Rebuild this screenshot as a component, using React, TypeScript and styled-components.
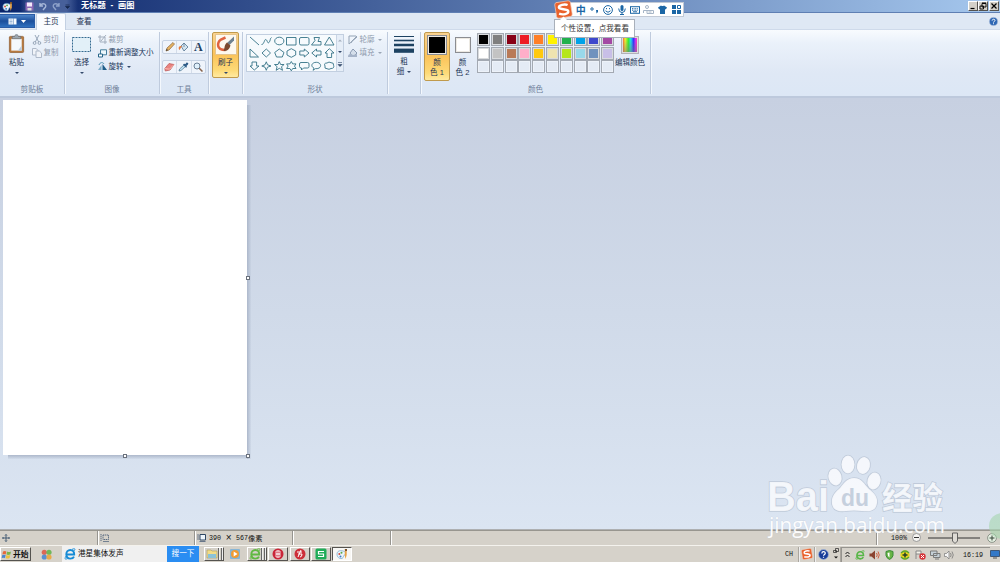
import React from "react";
import styled, { createGlobalStyle, css } from "styled-components";

const Global = createGlobalStyle`
  * { box-sizing: border-box; }
  html, body { margin: 0; padding: 0; }
  body {
    width: 1000px; height: 562px; overflow: hidden;
    font-family: "Liberation Sans", "Noto Sans CJK SC", sans-serif;
    font-size: 7.6px; line-height: 10px; color: #1d3555;
  }
  svg { display: block; flex: none; overflow: visible; }
`;

const Window = styled.div`
  position: relative; width: 1000px; height: 562px; overflow: hidden;
  display: flex; flex-direction: column;
`;

/* Title bar */
const TitleBar = styled.header`
  flex: none; height: 13px; display: flex; align-items: center; padding: 0 1px 0 2px;
  background: linear-gradient(90deg, #0a246a, #a6c8ee); border-bottom: 1px solid #5f7fb3;
`;
const QuickBar = styled.div`
  width: 58px; height: 12px; margin-left: 7px; padding-left: 5px;
  display: flex; align-items: center; gap: 5px;
  background: linear-gradient(90deg, transparent, #47609a 20%, #47609a 80%, transparent);
`;
const Title = styled.h1`
  margin: 0 auto 0 3px; font-size: 8.2px; line-height: 12px; font-weight: 700; color: #fff;
  white-space: pre; word-spacing: 2.6px;
`;
const WindowButton = styled.button<{ $gap?: number }>`
  width: 10px; height: 10px; padding: 0; margin-left: ${(p) => p.$gap ?? 0}px;
  display: flex; align-items: center; justify-content: center;
  background: #d4d0c8; border: 1px solid; border-color: #fff #55534f #55534f #fff;
`;

/* Tabs */
const TabRow = styled.nav`
  flex: none; height: 17px; display: flex; align-items: flex-end; padding-right: 2px;
  background: #dfe8f4; border-bottom: 1px solid #cfdaea;
`;
const FileButton = styled.button`
  width: 35px; height: 14px; margin-bottom: 1px; padding: 0; border: 1px solid #2a5ba5; border-left: 0;
  display: flex; align-items: center; justify-content: center; gap: 4px; align-self: flex-end;
  background: linear-gradient(#4c84ca, #1b4e9b 50%, #2f70bf);
`;
const Tab = styled.button<{ $active?: boolean }>`
  border: 0; padding: 1px 0 0; height: 16px; width: ${(p) => (p.$active ? 30 : 36)}px;
  font: inherit; color: #1f3553; background: none;
  ${(p) => p.$active && css`
    margin: 0 0 -1px 1px; border: 1px solid #c3d0e2; border-bottom: 0; height: 17px; padding: 0;
    border-radius: 2px 2px 0 0; background: #fafcff;
  `}
`;
const HelpSpot = styled.div`margin: 0 0 3px auto;`;

/* Ribbon */
const Ribbon = styled.section`
  flex: none; height: 68px; display: flex; padding-top: 1px;
  background: linear-gradient(#f8fbfe 0, #eaf1fa 20%, #dfe8f5 65%, #dce7f5);
  border-bottom: 2px solid #bdc9dc;
`;
const Group = styled.div<{ $w: number }>`
  width: ${(p) => p.$w}px; height: 62px; margin-top: 1px; display: flex; flex-direction: column;
  border-right: 1px solid #bfcbdd; box-shadow: 1px 0 #f4f8fd;
`;
const GroupBody = styled.div<{ $pad?: number }>`
  flex: none; height: 52px; display: flex; align-items: flex-start; padding-left: ${(p) => p.$pad ?? 3}px;
`;
const GroupLabel = styled.div`
  flex: none; text-align: center; color: #6f8099; line-height: 11px; height: 11px;
`;
const BigButton = styled.button<{ $w: number; $h?: number; $active?: boolean }>`
  flex: none; width: ${(p) => p.$w}px; height: ${(p) => p.$h ?? 46}px; padding: 1px 0 0;
  border: 1px solid transparent; background: none; font: inherit; font-size: 7.5px; color: #1d3555;
  display: flex; flex-direction: column; align-items: center; border-radius: 2px; white-space: nowrap;
  ${(p) => p.$active && css`
    border-color: #c09a4c; background: linear-gradient(#fbd391, #fbc35a 50%, #fdda78 85%, #ffeaa0);
  `}
`;
const BigIcon = styled.span<{ $h?: number }>`
  height: ${(p) => p.$h ?? 21}px; margin-bottom: ${(p) => 24 - (p.$h ?? 21)}px;
  display: flex; align-items: center; justify-content: center;
`;
const Caret = styled.i<{ $dim?: boolean; $top?: number }>`
  display: block; width: 0; height: 0; margin-top: ${(p) => p.$top ?? 0}px;
  border: 2px solid transparent; border-bottom: 0; border-top: 2px solid ${(p) => (p.$dim ? "#9aa5b5" : "#33496b")};
`;
const CommandList = styled.div<{ $left?: number }>`
  display: flex; flex-direction: column; padding-top: 1px; margin-left: ${(p) => p.$left ?? 0}px;
`;
const Command = styled.div<{ $dim?: boolean }>`
  height: 13.6px; display: flex; align-items: center; gap: 1.5px; white-space: nowrap; font-size: 7.5px;
  color: ${(p) => (p.$dim ? "#8f9bad" : "#173459")};
  & > i { margin-left: 1.5px; }
`;
const ToolBoxes = styled.div`display: flex; flex-direction: column; gap: 6px; padding-top: 8px;`;
const ToolBox = styled.div`
  width: 44px; height: 14px; display: flex; border: 1px solid #c6d2e3; border-radius: 2px; background: #eff4fb;
`;
const Tool = styled.button`
  flex: 1; padding: 0; border: 0; background: none; display: flex; align-items: center; justify-content: center;
  & + & { border-left: 1px solid #d3dce9; }
`;
const Letter = styled.b`font: 700 12px/12px "Liberation Serif", serif; color: #23405f;`;
const BrushFace = styled.span`
  width: 22px; height: 21px; display: flex; align-items: center; justify-content: center;
  background: #fdf8ef; border: 1px solid #e4c58f;
`;
const Gallery = styled.div`
  width: 98px; height: 38px; margin-top: 2px; display: flex; background: #f6fafd; border: 1px solid #c2cfe0;
`;
const ShapeGrid = styled.div`
  width: 89px; padding: 0 1px; display: grid; grid-template: repeat(3, 12.3px) / repeat(7, 12.5px); place-items: center;
`;
const GalleryScroll = styled.div`
  flex: 1; border-left: 1px solid #c8d4e4; display: flex; flex-direction: column; align-items: center;
  justify-content: space-around; background: #e6eef8;
`;
const SizeLabel = styled.span`display: flex; align-items: center; gap: 3px; height: 10px;`;
const ColorFace = styled.span<{ $c: string; $s: number }>`
  width: ${(p) => p.$s}px; height: ${(p) => p.$s}px; background: ${(p) => p.$c};
  border: 1px solid #8b8d92; box-shadow: inset 0 0 0 1px #ece9e2;
`;
const Palette = styled.div`
  margin: 1px 0 0 2px; width: 138px; display: grid; grid-template: repeat(3, 13.6px) / repeat(10, 13.8px);
`;
const Swatch = styled.span<{ $c?: string }>`
  width: 13px; height: 13px; border: 1px solid #a3a9b2; background: ${(p) => p.$c ?? "#e4ebf5"};
  box-shadow: inset 0 0 0 1px ${(p) => (p.$c ? "#d9dbdd" : "#edf2f9")};
`;
const Rainbow = styled.span`
  width: 18px; height: 18px; border: 1px solid #b2b2b8; box-shadow: inset 0 0 0 1px #ddd;
  background: linear-gradient(rgba(255,255,255,0) 20%, rgba(120,120,120,.55)),
    linear-gradient(90deg, #f33, #ee3 20%, #3e3 40%, #2de 55%, #33f 72%, #e3e 88%, #f35);
`;

/* Workspace */
const Workspace = styled.main`
  flex: none; height: 431px; padding: 2px 0 0 3px; background: linear-gradient(#c7d0e1, #d0dae9 50%, #dbe5f2);
`;
const Paper = styled.div`
  position: relative; width: 244px; height: 355px; background: #fff;
  &::after {
    content: ""; position: absolute; left: 244px; top: 5px; width: 4px; height: 354px;
    background: linear-gradient(90deg, #adb8cb, rgba(185,197,215,.2));
  }
  &::before {
    content: ""; position: absolute; left: 5px; top: 355px; width: 240px; height: 4px;
    background: linear-gradient(#adb8cb, rgba(185,197,215,.2));
  }
`;
const Handle = styled.i<{ $x: number; $y: number }>`
  position: absolute; z-index: 1; left: ${(p) => p.$x}px; top: ${(p) => p.$y}px; width: 4px; height: 4px;
  border: 1px solid #6a717c; background: #fff;
`;

/* Status bar */
const StatusBar = styled.footer`
  flex: none; height: 16px; display: flex; background: #d5d1c9; border-top: 1px solid #aeb0b2;
  font: 6.7px/14px "Liberation Mono", "Noto Sans CJK SC", monospace; color: #111;
`;
const StatusCell = styled.div<{ $w: number }>`
  width: ${(p) => p.$w}px; height: 15px; padding-left: 2px; display: flex; align-items: center; gap: 3px; white-space: pre;
  border-right: 1px solid #96948f; box-shadow: inset 0 1px #98968f, 1px 0 #fff;
`;
const Dimensions = styled.span`
  display: flex; align-items: center;
  & > em { width: 15px; text-align: center; font: 10px/12px "Liberation Sans", sans-serif; }
  & > small { font: 7.2px/14px "Noto Sans CJK SC", sans-serif; }
`;
const Zoom = styled.div`
  flex: 1; display: flex; align-items: center; gap: 5px; padding-left: 14px; box-shadow: inset 0 1px #98968f;
`;

/* Taskbar */
const TaskBar = styled.footer`
  flex: none; height: 17px; display: flex; align-items: center; background: #d6d2ca; border-top: 1px solid #f4f2ed; color: #111;
`;
const Start = styled.button`
  width: 31px; height: 14px; padding: 0 0 0 1px; border: 1px solid; border-color: #fff #55534f #55534f #fff;
  background: #d4d0c8; display: flex; align-items: center; gap: 2px; font: 700 7.8px/12px "Noto Sans CJK SC", sans-serif; color: #111;
`;
const Launcher = styled.div`width: 31px; display: flex; justify-content: center;`;
const Search = styled.div`
  width: 105px; height: 16px; background: #f0f0f0; display: flex; align-items: center; gap: 2px; padding-left: 2px; font-size: 7.6px;
`;
const SearchButton = styled.button`
  width: 32px; height: 16px; border: 0; padding: 0; margin-right: 5px; background: #2a8df2; color: #fff; font: inherit;
`;
const TaskButton = styled.button<{ $kind?: "flat" | "active" | "stack" }>`
  width: 20px; height: 14px; padding: 0; margin-right: 1.4px; display: flex; align-items: center; justify-content: center;
  background: ${(p) => (p.$kind === "active" ? "#f7f6f3" : "#d4d0c8")}; border: 1px solid;
  border-color: ${(p) => (p.$kind === "flat" ? "transparent" : p.$kind === "active" ? "#55534f #fff #fff #55534f" : "#fff #55534f #55534f #fff")};
  ${(p) => p.$kind === "stack" && css`
    justify-content: flex-start; padding-left: 1px;
    background: linear-gradient(90deg, transparent 13px, #666 13px 14px, #eee 14px 15px, transparent 15px 16px, #666 16px 17px, #eee 17px) #d4d0c8;
  `}
`;
const Tray = styled.div`
  margin-left: auto; width: 217px; height: 16px; display: flex; align-items: center; color: #111;
  font: 6.7px/14px "Liberation Mono", monospace;
`;
const TraySlot = styled.span<{ $w: number; $line?: boolean }>`
  width: ${(p) => p.$w}px; height: 15px; display: flex; align-items: center; justify-content: center;
  ${(p) => p.$line && css`border-right: 1px solid #aaa69f; box-shadow: 1px 0 #eee;`}
`;
const Notify = styled.div`
  height: 15px; width: 149px; padding-left: 1px; display: flex; align-items: center;
  border-top: 1px solid #96948f; border-left: 1px solid #96948f;
`;

/* Floating layers */
const InputBar = styled.div`
  position: absolute; left: 556px; top: 2px; width: 128px; height: 15px; padding-left: 17px;
  display: flex; align-items: center; background: #fff; border: 1px solid #c2cad6;
`;
const InputLogo = styled.div`position: absolute; left: -3px; top: -3px;`;
const InputSlot = styled.span`
  width: 13.7px; height: 12px; display: flex; align-items: center; justify-content: center;
  font: 700 10px/12px "Noto Sans CJK SC", sans-serif; color: #1b66a5;
`;
const Tip = styled.div`
  position: absolute; left: 554px; top: 19px; width: 81px; height: 19px; padding-left: 6px;
  border: 1px solid #a9b0ba; background: #fff; color: #333; font-size: 7.55px; line-height: 17px; white-space: nowrap;
  & > svg { position: absolute; left: 5px; top: -4px; }
`;
const Watermark = styled.div`position: absolute; left: 760px; top: 450px; pointer-events: none;`;

type IconProps = { w: number; h?: number; box?: string; children: React.ReactNode };
const Icon = ({ w, h = w, box, children }: IconProps) => (
  <svg width={w} height={h} viewBox={box ?? `0 0 ${w} ${h}`} fill="none">{children}</svg>
);

const PaintIcon = ({ s = 11 }: { s?: number }) => (
  <Icon w={s} box="0 0 12 12">
    <path d="M1 6C1 3 4 2 7 3c3 .5 3 3 1.5 4S8 9.5 6 10.5C3 11 1 9 1 6Z" fill="#e9f4fb" stroke="#71a3c7" strokeWidth=".7" />
    <circle cx="3.3" cy="6" r="1" fill="#d64b3a" /><circle cx="5.5" cy="4.7" r="1" fill="#58a947" /><circle cx="4.5" cy="8.5" r="1" fill="#3b75c1" />
    <path d="M9 1h1.7v6L9.5 11 8.7 7Z" fill="#e7a346" /><path d="M8.8 1H11v2H9Z" fill="#7c532b" />
  </Icon>
);

const SogouIcon = ({ s }: { s: number }) => (
  <Icon w={s} box="0 0 18 18">
    <g transform="rotate(-9 9 9)">
      <rect x="1.5" y="1.5" width="15" height="15" rx="2" fill="#e9622d" stroke="#f5d2c1" strokeWidth=".6" />
      <path d="M13.5 5.4C11 3.8 5 4 5 6.5S13.2 8.6 13.2 11.3 7.5 14.2 4.3 12.3" stroke="#fff" strokeWidth="2.3" />
    </g>
  </Icon>
);

const HelpIcon = ({ s, c }: { s: number; c: string }) => (
  <Icon w={s} box="0 0 10 10">
    <circle cx="5" cy="5" r="4.5" fill={c} stroke="#a5b9d8" strokeWidth=".7" />
    <path d="M3.5 4C3.5 2 6.6 2 6.6 3.8 6.6 5 5 4.9 5 6.2M5 7v1" stroke="#fff" strokeWidth="1.1" />
  </Icon>
);

const BrowserIcon = ({ s, c }: { s: number; c: string }) => (
  <Icon w={s} box="0 0 12 12">
    <path d="M3 6.5h7.2C10.3 3.8 8.7 2 6.3 2 4 2 2.3 3.8 2.3 6.3S4 10.6 6.4 10.6c1.7 0 3-.7 3.6-2" stroke={c} strokeWidth="1.9" />
    <path d="M10 3C12 .5 10.5.2 8 1.4M3 7C.5 10 0 12 3.5 10.7" stroke={c} strokeWidth=".9" />
  </Icon>
);

const Scissors = () => (
  <Icon w={10}><path d="M3 0l3.7 7M7 0L3.3 7" stroke="#98a7b9" /><circle cx="2.6" cy="8" r="1.4" stroke="#98a7b9" /><circle cx="7.4" cy="8" r="1.4" stroke="#98a7b9" /></Icon>
);
const Copy = () => (
  <Icon w={10}><path d="M.5.5h3.7L6 2.4V7H.5Z" fill="#f0f3f8" stroke="#aeb9c9" /><path d="M4 3h3.3L9.5 5v4.5H4Z" fill="#f0f3f8" stroke="#aeb9c9" /></Icon>
);
const Crop = () => (
  <Icon w={9}><path d="M2 0v7h7M0 2h7v7M3 6l5-6" stroke="#9ca8b8" strokeWidth=".9" /></Icon>
);
const Resize = () => (
  <Icon w={9}><path d="M2.5.8h6v5h-6Z" fill="#edf7fb" stroke="#437c9b" /><path d="M.5 5h4v3h-4Z" fill="#fff" stroke="#276588" /></Icon>
);
const Rotate = () => (
  <Icon w={9}><path d="M0 8h3.5V3Z" fill="#7dacc8" /><path d="M4.5 8H9L4.5 2Z" fill="#1e5c88" /><path d="M1 3C2 0 5 0 6 2" stroke="#4d90b2" /></Icon>
);

const shapePaths = [
  "M1 1l9 8", "M.5 8.500C3 9 3.500 2.500 5 3.500S6.500 8 8 6.500 9 2 10.500 1.500", "M.7 5a4.6 3.8 0 1 0 9.2 0a4.6 3.8 0 1 0-9.2 0", "M.5 1.5h9.5v7.5H.5Z",
  "M2 1.5h6.5q1.5 0 1.5 1.5v4.5Q10 9 8.5 9H2Q.5 9 .5 7.5V3Q.5 1.5 2 1.5", "M3 1.500h5.500L7 5.500h3V9H.500L4 4.500Z", "M5.3 1L10 9H.5Z",
  "M1 1l8.5 8H1Z", "M5.3 1L9.5 5 5.3 9 1 5Z", "M5.3 1L10 4.5 8.3 9H2.5L.7 4.5Z", "M5.300.700L9.700 3v4L5.300 9.300 1 7V3Z",
  "M.8 3h4.500V1L10 5 5.300 9V7H.8Z", "M10 3H5.500V1L.8 5l4.700 4V7H10Z", "M3 9.500V5H1L5.300.7 10 5H7.600v4.500Z",
  "M3 1v4H1l4.300 4L10 5H7.600V1Z", "M5.300.8l1.200 3L10 5 6.500 6.200 5.300 9.300 4 6.200.8 5 4 3.800Z", "M5.300.5l1.300 3h3.500L7.500 5.700l1 3.600-3.200-2-3.100 2 .9-3.600L.5 3.500H4Z",
  "M5.300.5l1.400 2.400H10L8.500 5.100 10 7.500H6.700L5.300 9.800 3.900 7.500H.6l1.500-2.400L.6 2.900h3.300Z",
  "M2 1.500h6.500Q10 1.500 10 3v2.500Q10 7 8.500 7H4.500L2.500 9V7Q.5 7 .5 5.500V3Q.5 1.500 2 1.500", "M3 7.200C-1 5 1 1.300 5.300 1.300S11 5.500 8 7.100Q6 8 4.500 7.600L2 9.300Z",
  "M3 2Q5 .3 7 1.700 10 1.500 9.600 4.300 10.600 7.500 7 7.500 5 9 3 7.700 0 7.800 1 5-.5 2 3 2",
];

const palette: (string | undefined)[] = [
  "#000", "#7f7f7f", "#880015", "#ed1c24", "#ff7f27", "#fff200", "#22b14c", "#00a2e8", "#3f48cc", "#a349a4",
  "#fff", "#c3c3c3", "#b97a57", "#ffaec9", "#ffc90e", "#efe4b0", "#b5e61d", "#99d9ea", "#7092be", "#c8bfe7",
  ...Array(10).fill(undefined),
];

const RibbonGroups = () => (
  <Ribbon>
    <Group $w={65}>
      <GroupBody $pad={2}>
        <BigButton $w={29}>
          <BigIcon $h={19}>
            <Icon w={17} h={19} box="0 0 17 20">
              <rect x="1" y="2.500" width="15" height="17" rx="1" fill="#b7793e" stroke="#8b582c" strokeWidth=".7" />
              <path d="M3 5h11v12.500H3Z" fill="#f5f9fd" /><path d="M14 12l-4 5.500h4Z" fill="#bccbdb" />
              <path d="M4 5V2.500h2.500L7.500.7h2l1 1.800H13V5Z" fill="#9ba6b0" stroke="#5a6370" strokeWidth=".6" />
            </Icon>
          </BigIcon>
          粘贴<Caret $top={4} />
        </BigButton>
        <CommandList $left={1}>
          <Command $dim><Scissors />剪切</Command>
          <Command $dim><Copy />复制</Command>
        </CommandList>
      </GroupBody>
      <GroupLabel>剪贴板</GroupLabel>
    </Group>
    <Group $w={95}>
      <GroupBody>
        <BigButton $w={27}>
          <BigIcon><Icon w={19} h={15}><path d="M.5.5h18v14H.5Z" fill="#e2f0f8" stroke="#356b91" strokeDasharray="2 1" /></Icon></BigIcon>
          选择<Caret $top={4} />
        </BigButton>
        <CommandList $left={3}>
          <Command $dim><Crop />裁剪</Command>
          <Command><Resize />重新调整大小</Command>
          <Command><Rotate />旋转<Caret /></Command>
        </CommandList>
      </GroupBody>
      <GroupLabel>图像</GroupLabel>
    </Group>
    <Group $w={49}>
      <GroupBody $pad={2}>
        <ToolBoxes>
          <ToolBox>
            <Tool><Icon w={10}><path d="M1 9l1-3 6-5.500L9.500 2 4 8Z" fill="#e7b463" stroke="#8a643b" strokeWidth=".7" /><path d="M1 9l.7-2 1.300 1Z" fill="#333" /></Icon></Tool>
            <Tool><Icon w={11} h={10}><path d="M3 4l3-3 4 4-4 4Z" fill="#d3e4f0" stroke="#54748f" strokeWidth=".8" /><path d="M3 4C0 4 .5 7 1.500 8 3 7 2 5 4.500 5Z" fill="#e67839" /><path d="M6 1v4" stroke="#54748f" strokeWidth=".7" /></Icon></Tool>
            <Tool><Letter>A</Letter></Tool>
          </ToolBox>
          <ToolBox>
            <Tool><Icon w={11} h={10}><path d="M.8 6.500L5 1.500l5 1-4 5.500-4.700 1Z" fill="#e98380" stroke="#b95553" strokeWidth=".7" /><path d="M.8 6.500l4.800.7L10 2.500" stroke="#fbc6bd" strokeWidth=".8" /></Icon></Tool>
            <Tool><Icon w={11} h={10}><path d="M1 9l.6-2L6 3l1.500 1.500L3 8.500Z" fill="#c3e4f5" stroke="#48718c" strokeWidth=".7" /><path d="M5 2.500l1-.7L7.500 2 8.500.5Q11 .5 10 2.500L8.500 4 9 5l-1 .7Z" fill="#315d89" /></Icon></Tool>
            <Tool><Icon w={10}><circle cx="4" cy="4" r="3" fill="#dff0fb" stroke="#6a7f96" /><path d="M6.200 6.200L9.500 9.500" stroke="#86624b" strokeWidth="1.500" /></Icon></Tool>
          </ToolBox>
        </ToolBoxes>
      </GroupBody>
      <GroupLabel>工具</GroupLabel>
    </Group>
    <Group $w={34}>
      <GroupBody>
        <BigButton $w={27} $active>
          <BigIcon>
            <BrushFace>
              <Icon w={19}>
                <path d="M9.500 2.500L5 4.500Q1.500 7 2.200 11t7.300 4" stroke="#df6340" strokeWidth="2.500" />
                <path d="M18 1.500v4L13.500 10 11 8Z" fill="#6e8190" /><path d="M11 7.500l3.500 3c-1 4-4 6-7 5.500C9 13 8 10 11 7.500Z" fill="#7b492f" />
              </Icon>
            </BrushFace>
          </BigIcon>
          刷子<Caret $top={4} />
        </BigButton>
      </GroupBody>
    </Group>
    <Group $w={145}>
      <GroupBody>
        <Gallery>
          <ShapeGrid>
            {shapePaths.map((d, i) => (
              <Icon key={i} w={11} h={10}><path d={d} stroke="#347387" strokeWidth=".9" /></Icon>
            ))}
          </ShapeGrid>
          <GalleryScroll>
            <Icon w={4} h={3}><path d="M0 2.500l2-2 2 2Z" fill="#a5afbd" /></Icon>
            <Caret />
            <Icon w={4} h={5}><path d="M0 .5h4M0 2.500h4l-2 2Z" stroke="#33496b" strokeWidth=".6" fill="#33496b" /></Icon>
          </GalleryScroll>
        </Gallery>
        <CommandList $left={4}>
          <Command $dim><Icon w={10}><path d="M8 1H1v8L9 2M3 8l1-2 5-5" stroke="#94a3b5" /></Icon>轮廓<Caret $dim /></Command>
          <Command $dim><Icon w={10}><path d="M2 5l3-4 4 4-4 4Z" fill="#d4deea" stroke="#8b9bb2" /><path d="M0 9c0-3 2-4 5-2l4-1v3Z" fill="#a5b3c8" /></Icon>填充<Caret $dim /></Command>
        </CommandList>
      </GroupBody>
      <GroupLabel>形状</GroupLabel>
    </Group>
    <Group $w={33}>
      <GroupBody $pad={2}>
        <BigButton $w={28}>
          <BigIcon $h={20}><Icon w={20} h={18}><path d="M0 1.500h20" stroke="#1d4261" /><path d="M0 5.500h20" stroke="#1d4261" strokeWidth="1.600" /><path d="M0 10h20" stroke="#1d4261" strokeWidth="2.500" /><path d="M0 15.700h20" stroke="#1d4261" strokeWidth="4.200" /></Icon></BigIcon>
          粗<SizeLabel>细<Caret /></SizeLabel>
        </BigButton>
      </GroupBody>
    </Group>
    <Group $w={230}>
      <GroupBody $pad={3}>
        <BigButton $w={26} $h={49} $active>
          <BigIcon><ColorFace $c="#000" $s={20} /></BigIcon>
          颜<SizeLabel>色 1</SizeLabel>
        </BigButton>
        <BigButton $w={25} $h={49}>
          <BigIcon><ColorFace $c="#fff" $s={16} /></BigIcon>
          颜<SizeLabel>色 2</SizeLabel>
        </BigButton>
        <Palette>{palette.map((c, i) => <Swatch key={i} $c={c} />)}</Palette>
        <BigButton $w={30}><BigIcon><Rainbow /></BigIcon>编辑颜色</BigButton>
      </GroupBody>
      <GroupLabel>颜色</GroupLabel>
    </Group>
  </Ribbon>
);

const Badge = ({ c, children }: { c: string; children: React.ReactNode }) => (
  <Icon w={12}><circle cx="6" cy="6" r="5.500" fill={c} />{children}</Icon>
);

export default function App() {
  return (
    <>
      <Global />
      <Window>
        <TitleBar>
          <PaintIcon />
          <QuickBar>
            <Icon w={9}><path d="M.5.5h8v8h-8Z" fill="#8b68b6" /><path d="M2 .5h5v4H2Z" fill="#f4e9fb" /><path d="M2.500 6h4v2.500h-4Z" fill="#ddd" /></Icon>
            <Icon w={8}><path d="M1 1v3h3M1 4C3 0 8 2 6.500 5L4 8" stroke="#a6b7d8" strokeWidth="1.400" /></Icon>
            <Icon w={8}><path d="M7 1v3H4M7 4C5 0 0 2 1.500 5L4 8" stroke="#8ea2ca" strokeWidth="1.400" /></Icon>
            <Icon w={5}><path d="M.5 1h4M.5 2.500h4l-2 2Z" stroke="#14264c" strokeWidth=".7" fill="#14264c" /></Icon>
          </QuickBar>
          <Title>无标题 - 画图</Title>
          <WindowButton><Icon w={8}><path d="M1.500 6.500h4" stroke="#000" strokeWidth="1.200" /></Icon></WindowButton>
          <WindowButton><Icon w={8}><path d="M3 1.500h4v3.500H3ZM1 4h3.500v3H1Z" stroke="#000" strokeWidth=".9" /><path d="M3 1h4" stroke="#000" /></Icon></WindowButton>
          <WindowButton $gap={1}><Icon w={8}><path d="M1.500 1.500l5 5M6.500 1.500l-5 5" stroke="#000" strokeWidth="1.200" /></Icon></WindowButton>
        </TitleBar>
        <TabRow>
          <FileButton>
            <Icon w={9} h={7}><path d="M.5.5h8v6h-8Z" fill="#f7fbff" /><path d="M1.500 2h3M1.500 3.500h3M1.500 5h3M5.500 0v7" stroke="#628bbd" strokeWidth=".6" /></Icon>
            <Icon w={5} h={3}><path d="M0 0h5L2.500 3Z" fill="#fff" /></Icon>
          </FileButton>
          <Tab $active>主页</Tab>
          <Tab>查看</Tab>
          <HelpSpot><HelpIcon s={9} c="#2e67b4" /></HelpSpot>
        </TabRow>
        <RibbonGroups />
        <Workspace>
          <Paper><Handle $x={243} $y={176} /><Handle $x={243} $y={354} /><Handle $x={120} $y={354} /></Paper>
        </Workspace>
        <StatusBar>
          <StatusCell $w={98}><Icon w={8}><path d="M4 .5v7M.5 4h7M3 1.500L4 .5l1 1M3 6.500l1 1 1-1M1.500 3L.5 4l1 1M6.500 3l1 1-1 1" stroke="#2b4665" strokeWidth=".8" /></Icon></StatusCell>
          <StatusCell $w={97}><Icon w={9} h={8}><path d="M1 0v7M3 1h5.500v4.500H3Z" stroke="#4a5e78" strokeDasharray="1.300 .6" strokeWidth=".9" /><path d="M3 7.500h6" stroke="#4a5e78" strokeWidth=".7" /></Icon></StatusCell>
          <StatusCell $w={98}><Icon w={9} h={8}><path d="M3 .5h5.500V6H3Z" fill="#eef5fb" stroke="#2e4764" /><path d="M1 0v6M2.500 7.500h6" stroke="#4a5e78" strokeWidth=".8" /></Icon><Dimensions>390<em>×</em>567<small>像素</small></Dimensions></StatusCell>
          <StatusCell $w={98} />
          <StatusCell $w={486} />
          <Zoom>
            100%
            <Icon w={9}><circle cx="4.500" cy="4.500" r="4" fill="#f6f5f2" stroke="#888" strokeWidth=".8" /><path d="M2 4.500h5" stroke="#333" /></Icon>
            <Icon w={52} h={12}><path d="M2 6h52" stroke="#333" /><path d="M26.500 1h5v8L29 11.500 26.500 9Z" fill="#dedbd5" stroke="#555" strokeWidth=".9" /></Icon>
            <Icon w={10}><circle cx="9" cy="5" r="4.400" fill="#e5f0e2" stroke="#778377" strokeWidth=".8" /><path d="M6.500 5h5M9 2.500v5" stroke="#344738" /></Icon>
          </Zoom>
        </StatusBar>
        <TaskBar>
          <Start>
            <Icon w={9}><path d="M1 1.500Q3 .5 4.300 1.500L3.700 4.500Q2 3.700.4 4.500Z" fill="#e7693b" /><path d="M5 1.500Q7 2.500 9 1.500L8.300 4.500Q6 5.300 4.500 4.500Z" fill="#79b54b" /><path d="M.3 5Q2 4.400 3.600 5L3 8Q1.500 7.300-.3 8Z" fill="#4b85cf" /><path d="M4.400 5Q6 6 8.200 5L7.600 8Q5.500 9 3.700 8Z" fill="#eec23d" /></Icon>
            开始
          </Start>
          <Launcher><Icon w={11}><circle cx="3.300" cy="3.300" r="2.600" fill="#dd6855" /><circle cx="8" cy="3.300" r="2.600" fill="#70b75a" /><circle cx="3.300" cy="8" r="2.600" fill="#5b8fd0" /><circle cx="8" cy="8" r="2.600" fill="#e8aa49" /></Icon></Launcher>
          <Search><BrowserIcon s={12} c="#168bd5" />港星集体发声</Search>
          <SearchButton>搜一下</SearchButton>
          <TaskButton $kind="stack"><Icon w={12}><path d="M1 2h4l1 1h5v7H1Z" fill="#f3dc87" stroke="#aa9b60" strokeWidth=".6" /><path d="M2 6h8v4H2Z" fill="#8ac2d8" /></Icon></TaskButton>
          <TaskButton $kind="flat"><Icon w={12}><rect x="1" y="1" width="10" height="10" rx="1" fill="#86b5d6" /><circle cx="6" cy="6" r="4" fill="#f09b32" /><path d="M4.700 3.500L8.500 6 4.700 8.500Z" fill="#fff" /></Icon></TaskButton>
          <TaskButton $kind="stack"><BrowserIcon s={12} c="#60b942" /></TaskButton>
          <TaskButton><Badge c="#ca2538"><path d="M4 3h4v3H4ZM4 6h4v3H4ZM6 2v8" stroke="#fff" strokeWidth=".8" /></Badge></TaskButton>
          <TaskButton><Badge c="#cd2e38"><path d="M3 4h5M7 2L4 9M4 6h4Q8 9 6 9" stroke="#fff" strokeWidth="1" /></Badge></TaskButton>
          <TaskButton><Icon w={12}><rect x=".5" y=".5" width="11" height="11" rx="1.500" fill="#1fac58" /><path d="M9 3.500H3.500V6h5v2.500H3" stroke="#fff" strokeWidth="1.200" /></Icon></TaskButton>
          <TaskButton $kind="active"><PaintIcon s={12} /></TaskButton>
          <Tray>
            <TraySlot $w={12}>CH</TraySlot>
            <TraySlot $w={4} $line />
            <TraySlot $w={16} $line><SogouIcon s={12} /></TraySlot>
            <TraySlot $w={17}><HelpIcon s={11} c="#183d99" /></TraySlot>
            <TraySlot $w={9} $line><Icon w={6} h={12}><path d="M2.500.5H5.500v3h-3ZM.5 2.500h3v2h-3Z" stroke="#222" strokeWidth=".7" /><path d="M1 8.500h4l-2 2Z" fill="#111" /></Icon></TraySlot>
            <Notify>
              <TraySlot $w={9}><Icon w={5} h={7}><path d="M.5 3l2-2 2 2M.5 6l2-2 2 2" stroke="#222" /></Icon></TraySlot>
              <TraySlot $w={15}><BrowserIcon s={10} c="#58b647" /></TraySlot>
              <TraySlot $w={15}><Icon w={11} h={10}><path d="M.5 3.500h2L6 .5v9L2.500 6.500h-2Z" fill="#8a4430" /><path d="M7.500 3q1.500 2 0 4M9 1.500q2.500 3.500 0 7" stroke="#cf5d3d" /></Icon></TraySlot>
              <TraySlot $w={15}><Icon w={9} h={10}><path d="M1 1.500L4.500.5 8 1.500v4Q7.500 8 4.500 9.500 1.500 8 1 5.500Z" fill="#68b447" stroke="#398a38" /><path d="M4.500 2.500v5Q2.500 6 2.500 3Z" fill="#fff" /></Icon></TraySlot>
              <TraySlot $w={15}><Icon w={10}><circle cx="5" cy="5" r="4.700" fill="#e7d51c" /><path d="M1 3Q5-1 9 3M1 7q4 4 8 0" stroke="#5ba536" strokeWidth="1.300" /><path d="M2.500 5h5M5 2.500v5" stroke="#233c29" strokeWidth="1.500" /></Icon></TraySlot>
              <TraySlot $w={16}><Icon w={11} h={10}><path d="M1 9V1h5v3H1" fill="#f5f2e9" stroke="#888" /><circle cx="7.500" cy="6.500" r="3.200" fill="#d6353a" /><path d="M6 5l3 3M9 5L6 8" stroke="#fff" /></Icon></TraySlot>
              <TraySlot $w={14}><Icon w={11} h={10}><path d="M.5 1h6.500v4.500H.5ZM3.500 3.500H10v4H3.500ZM5 9h4" fill="#c5d0d7" stroke="#7a7b7b" /></Icon></TraySlot>
              <TraySlot $w={15}><Icon w={11} h={10}><path d="M.5 3.500h2L5 1v8L2.500 6.500h-2Z" fill="#f5f5f5" stroke="#777" strokeWidth=".7" /><path d="M6.500 3q1.300 2 0 4M8 1.500q2.500 3.500 0 7" stroke="#777" strokeWidth=".8" /></Icon></TraySlot>
              <TraySlot $w={32}>16:19</TraySlot>
            </Notify>
            <TraySlot $w={10}><Icon w={10} h={9}><path d="M.5.5h9v6h-9Z" fill="#3479c8" stroke="#3f5878" /><path d="M3 8h4" stroke="#555" /></Icon></TraySlot>
          </Tray>
        </TaskBar>

        <InputBar>
          <InputLogo><SogouIcon s={19} /></InputLogo>
          <InputSlot>中</InputSlot>
          <InputSlot><Icon w={9} h={8}><circle cx="2" cy="3" r="1.200" stroke="#1b66a5" /><path d="M6 4h2v2L6.500 7.500Z" fill="#1b66a5" /></Icon></InputSlot>
          <InputSlot><Icon w={10}><circle cx="5" cy="5" r="4.400" stroke="#1b66a5" /><path d="M3.500 3v1.200M6.500 3v1.200M2.500 5.800q2.500 3 5 0" stroke="#1b66a5" /></Icon></InputSlot>
          <InputSlot><Icon w={8} h={10}><rect x="2.500" width="3" height="6" rx="1.500" fill="#1b66a5" /><path d="M.7 3.500q0 4 3.300 4t3.300-4M4 7.500V9.500M2 9.500h4" stroke="#1b66a5" /></Icon></InputSlot>
          <InputSlot><Icon w={10} h={8}><rect x=".5" y=".7" width="9" height="6.600" stroke="#1b66a5" /><path d="M2 2.700h6M2 4.200h6" stroke="#1b66a5" strokeDasharray="1 .6" /><path d="M3 5.800h4" stroke="#1b66a5" /></Icon></InputSlot>
          <InputSlot><Icon w={11} h={9}><circle cx="4" cy="2" r="1.500" stroke="#a6b5c6" /><path d="M.5 8V5.500h4M4 5.500h6.500v3H4ZM5.500 7h3" stroke="#a6b5c6" /></Icon></InputSlot>
          <InputSlot><Icon w={9}><path d="M3 .5q1.500 1 3 0L9 2.500 7.800 4.500 7 4v5H2V4l-.8.500L0 2.500Z" fill="#1b66a5" /></Icon></InputSlot>
          <InputSlot><Icon w={9}><path d="M0 0h4v4H0ZM0 5h4v4H0ZM5 5h4v4H5Z" fill="#1b66a5" /><path d="M5.500.5h3v3h-3Z" stroke="#1b66a5" /></Icon></InputSlot>
        </InputBar>
        <Tip><Icon w={7} h={4}><path d="M0 4l3.500-3.500L7 4Z" fill="#fff" /></Icon>个性设置，点我看看</Tip>

        <Watermark>
          <svg width="240" height="100" viewBox="0 0 240 100">
            <circle cx="242" cy="76" r="13" fill="#a5d6ae" opacity=".6" />
            <g fill="#f8fafd" fillOpacity=".9" stroke="#b9c4d4" strokeOpacity=".8" strokeWidth="1.600" paintOrder="stroke">
              <text x="7" y="61" fontFamily="Liberation Sans" fontWeight="700" fontSize="42" textLength="62" lengthAdjust="spacingAndGlyphs">Bai</text>
              <ellipse cx="75" cy="27" rx="6.500" ry="8.500" transform="rotate(-15 75 27)" />
              <ellipse cx="88" cy="14.500" rx="6.500" ry="9" />
              <ellipse cx="103.500" cy="15.500" rx="6.500" ry="8.500" transform="rotate(12 103.500 15.500)" />
              <ellipse cx="114" cy="31" rx="6.500" ry="8.500" transform="rotate(15 114 31)" />
              <path d="M94 28c-8 0-11 7-15 11-5 4-8 9-7 15 1 7 8 8 14 7q8-1 16 0c8 1 14 0 15-8 1-6-3-10-8-14-5-5-7-11-15-11Z" />
              <text x="122" y="58.500" fontFamily="Noto Sans CJK SC" fontWeight="700" fontSize="31" textLength="61" lengthAdjust="spacingAndGlyphs">经验</text>
            </g>
            <text x="81" y="55.500" fontFamily="Liberation Sans" fontWeight="700" fontSize="23" fill="#c6d0de" textLength="28" lengthAdjust="spacingAndGlyphs">du</text>
            <text x="9" y="83" fontFamily="Open Sans" fontSize="21.500" fill="#fff" fillOpacity=".95" stroke="#c3cad6" strokeOpacity=".4" strokeWidth="1" paintOrder="stroke" textLength="176" lengthAdjust="spacingAndGlyphs">jingyan.baidu.com</text>
          </svg>
        </Watermark>
      </Window>
    </>
  );
}
